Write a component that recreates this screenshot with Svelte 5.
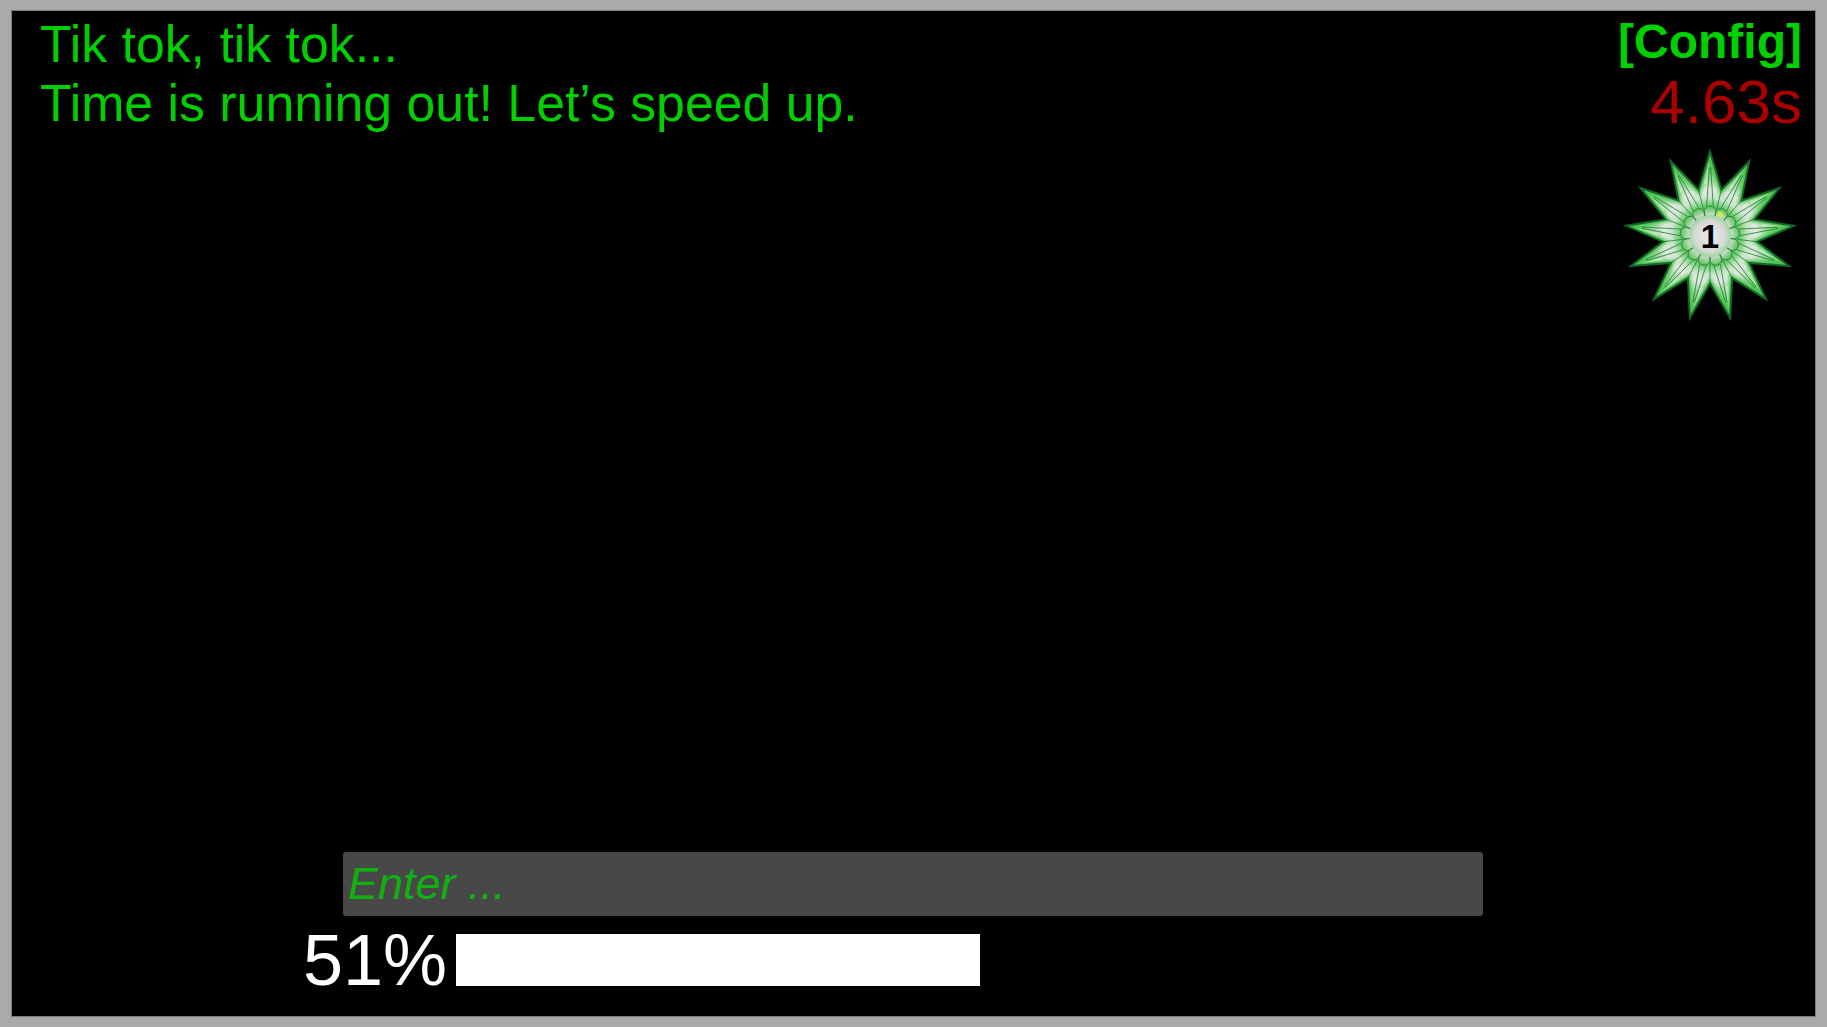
<script>
  let percent = 51;

  // star badge, 13 points
  const cx = 100;
  const cy = 100;
  const n = 13;
  const rOuter = 84.5;
  const rInner = 47.5;

  function pt(r, a) {
    return (cx + r * Math.sin(a)).toFixed(1) + "," + (cy - r * Math.cos(a)).toFixed(1);
  }

  const petals = [];
  for (let i = 0; i < n; i++) {
    const a = (i * 2 * Math.PI) / n;
    const step = Math.PI / n;
    petals.push({
      tip: pt(rOuter, a),
      valley: pt(rInner, a + step),
      shine: [pt(rOuter - 10, a - 0.01), pt(rOuter - 32, a - 0.12), pt(rOuter - 32, a - 0.05)].join(" "),
      veins: [
        [pt(30, a - 0.11), pt(rOuter - 16, a - 0.01)],
        [pt(30, a + 0.11), pt(rOuter - 16, a + 0.01)],
        [pt(27, a + step), pt(rInner - 1, a + step)],
      ],
      scallop: pt(24, a),
    });
  }
  const starPoints = petals.map((p) => p.tip + " " + p.valley).join(" ");
</script>

<div class="page">
  <main class="screen">
    <header class="top">
      <div class="story">
        <div>Tik tok, tik tok...</div>
        <div>Time is running out! Let’s speed up.</div>
      </div>
      <div class="side">
        <a class="config" href="#config">[Config]</a>
        <div class="timer">4.63s</div>
        <svg class="star" viewBox="0 0 200 200" width="200" height="200">
          <defs>
            <radialGradient id="petal" gradientUnits="userSpaceOnUse" cx="100" cy="100" r="84.5">
              <stop offset="0" stop-color="#e6e6e6" />
              <stop offset="0.26" stop-color="#dcdcdc" />
              <stop offset="0.34" stop-color="#5cc75c" />
              <stop offset="0.45" stop-color="#c9e4c9" />
              <stop offset="0.55" stop-color="#e2e8e2" />
              <stop offset="0.68" stop-color="#93d693" />
              <stop offset="0.82" stop-color="#5ccb5c" />
              <stop offset="1" stop-color="#4dbb4d" />
            </radialGradient>
            <radialGradient id="hub">
              <stop offset="0" stop-color="#ececec" />
              <stop offset="0.72" stop-color="#d8d8d8" />
              <stop offset="1" stop-color="#9ad89a" />
            </radialGradient>
            <clipPath id="star-clip">
              <polygon points={starPoints} />
            </clipPath>
            <filter id="soft" x="-10%" y="-10%" width="120%" height="120%">
              <feGaussianBlur stdDeviation="1.4" />
            </filter>
          </defs>
          <polygon points={starPoints} fill="url(#petal)" />
          <g clip-path="url(#star-clip)">
            <polygon points={starPoints} fill="none" stroke="#4cc44c" stroke-width="6" filter="url(#soft)" />
          </g>
          <polygon points={starPoints} fill="none" stroke="#14662a" stroke-width="2" stroke-linejoin="miter" />
          {#each petals as p}
            <polygon points={p.shine} fill="#e4efe4" opacity="0.55" />
            {#each p.veins as v}
              <polyline points={v.join(" ")} fill="none" stroke="#1a7f30" stroke-width="0.8" />
            {/each}
          {/each}
          {#each petals as p}
            <circle cx={p.scallop.split(",")[0]} cy={p.scallop.split(",")[1]} r="6" fill="#6fcb6f" fill-opacity="0.25" stroke="#14752a" stroke-width="0.8" />
          {/each}
          <circle cx={cx} cy={cy} r="21" fill="url(#hub)" />
          <circle cx="110.5" cy="78.5" r="2.6" fill="#d4ee3c" />
          <text x={cx} y="112" text-anchor="middle" class="rank">1</text>
        </svg>
      </div>
    </header>

    <div class="bottom">
      <input class="answer" type="text" placeholder="Enter ..." />
      <div class="progress">
        <span class="percent">{percent}%</span>
        <div class="track">
          <div class="fill" style="width: {percent}%"></div>
        </div>
      </div>
    </div>
  </main>
</div>

<style>
  :global(body) {
    margin: 0;
    background-color: #aaaaaa;
  }

  .page {
    box-sizing: border-box;
    height: 100vh;
    padding: 10px 11px;
    display: flex;
    font-family: "Liberation Sans", Arial, sans-serif;
  }

  .screen {
    flex: 1;
    display: flex;
    flex-direction: column;
    justify-content: space-between;
    background-color: #000;
    border: 1px solid #7c7c7c;
  }

  .top {
    display: flex;
    justify-content: space-between;
    padding: 4px 13px 0 28px;
  }

  .story {
    color: #00d000;
    font-size: 51.8px;
    line-height: 59px;
  }

  .side {
    display: flex;
    flex-direction: column;
    align-items: flex-end;
  }

  .config {
    color: #00d000;
    font-size: 48px;
    font-weight: bold;
    line-height: 54px;
    text-decoration: none;
  }

  .timer {
    color: #aa0000;
    font-size: 62px;
    line-height: 66px;
  }

  .star {
    margin-top: 1px;
    margin-right: -8px;
  }

  .rank {
    font-family: "Liberation Sans", Arial, sans-serif;
    font-size: 33px;
    font-weight: bold;
    fill: #000;
  }

  .bottom {
    display: flex;
    flex-direction: column;
    align-items: flex-end;
    gap: 18px;
    padding: 0 332px 30px 0;
  }

  .answer {
    box-sizing: border-box;
    width: 1140px;
    height: 64px;
    padding: 0 5px;
    border: 0;
    border-radius: 3px;
    background-color: #484848;
    color: #11b011;
    font-family: inherit;
    font-size: 45px;
    font-style: italic;
    outline: none;
  }

  .answer::placeholder {
    color: #11b011;
    opacity: 1;
  }

  .progress {
    display: flex;
    align-items: center;
    gap: 9px;
    margin-right: -1px;
  }

  .percent {
    color: #fff;
    font-size: 72px;
    line-height: 52px;
  }

  .track {
    width: 1028px;
    height: 52px;
  }

  .fill {
    height: 100%;
    background-color: #fff;
  }
</style>
